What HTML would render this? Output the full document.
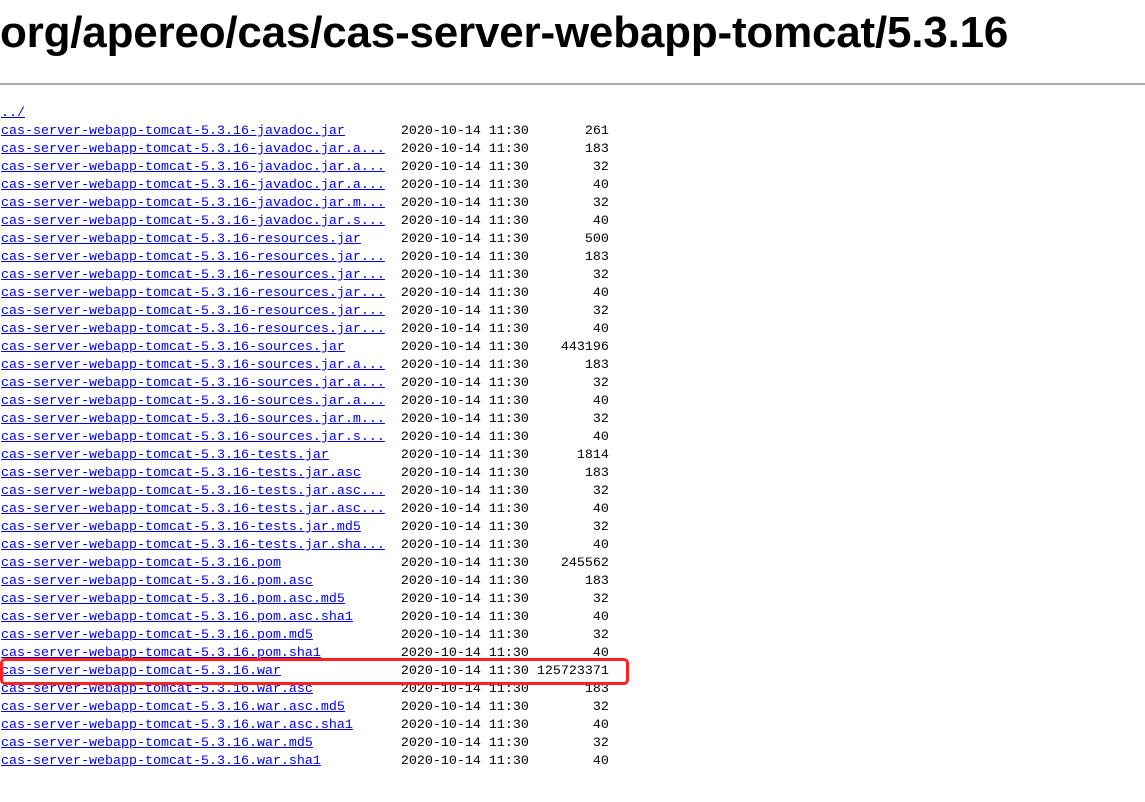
<!DOCTYPE html>
<html><head><meta charset="utf-8"><style>
html,body{margin:0;padding:0;background:#fff;width:1145px;height:802px;overflow:hidden}
h1{position:absolute;left:0;top:8px;margin:0;font:bold 44px "Liberation Sans",sans-serif;color:#000;white-space:nowrap;letter-spacing:-0.2px}
hr{position:absolute;left:0;top:83px;width:1145px;margin:0;border:0;border-top:2px solid #aaa}
pre{position:absolute;left:1px;top:105px;margin:0;font:13.33px/18px "Liberation Mono",monospace;color:#000}
a{color:#00e;text-decoration:underline}
.box{position:absolute;left:0;top:658px;width:623px;height:21px;border:3px solid #f22;border-radius:5px}
</style></head><body>
<h1>org/apereo/cas/cas-server-webapp-tomcat/5.3.16</h1>
<hr>
<pre><a>../</a>
<a>cas-server-webapp-tomcat-5.3.16-javadoc.jar</a>       2020-10-14 11:30       261
<a>cas-server-webapp-tomcat-5.3.16-javadoc.jar.a...</a>  2020-10-14 11:30       183
<a>cas-server-webapp-tomcat-5.3.16-javadoc.jar.a...</a>  2020-10-14 11:30        32
<a>cas-server-webapp-tomcat-5.3.16-javadoc.jar.a...</a>  2020-10-14 11:30        40
<a>cas-server-webapp-tomcat-5.3.16-javadoc.jar.m...</a>  2020-10-14 11:30        32
<a>cas-server-webapp-tomcat-5.3.16-javadoc.jar.s...</a>  2020-10-14 11:30        40
<a>cas-server-webapp-tomcat-5.3.16-resources.jar</a>     2020-10-14 11:30       500
<a>cas-server-webapp-tomcat-5.3.16-resources.jar...</a>  2020-10-14 11:30       183
<a>cas-server-webapp-tomcat-5.3.16-resources.jar...</a>  2020-10-14 11:30        32
<a>cas-server-webapp-tomcat-5.3.16-resources.jar...</a>  2020-10-14 11:30        40
<a>cas-server-webapp-tomcat-5.3.16-resources.jar...</a>  2020-10-14 11:30        32
<a>cas-server-webapp-tomcat-5.3.16-resources.jar...</a>  2020-10-14 11:30        40
<a>cas-server-webapp-tomcat-5.3.16-sources.jar</a>       2020-10-14 11:30    443196
<a>cas-server-webapp-tomcat-5.3.16-sources.jar.a...</a>  2020-10-14 11:30       183
<a>cas-server-webapp-tomcat-5.3.16-sources.jar.a...</a>  2020-10-14 11:30        32
<a>cas-server-webapp-tomcat-5.3.16-sources.jar.a...</a>  2020-10-14 11:30        40
<a>cas-server-webapp-tomcat-5.3.16-sources.jar.m...</a>  2020-10-14 11:30        32
<a>cas-server-webapp-tomcat-5.3.16-sources.jar.s...</a>  2020-10-14 11:30        40
<a>cas-server-webapp-tomcat-5.3.16-tests.jar</a>         2020-10-14 11:30      1814
<a>cas-server-webapp-tomcat-5.3.16-tests.jar.asc</a>     2020-10-14 11:30       183
<a>cas-server-webapp-tomcat-5.3.16-tests.jar.asc...</a>  2020-10-14 11:30        32
<a>cas-server-webapp-tomcat-5.3.16-tests.jar.asc...</a>  2020-10-14 11:30        40
<a>cas-server-webapp-tomcat-5.3.16-tests.jar.md5</a>     2020-10-14 11:30        32
<a>cas-server-webapp-tomcat-5.3.16-tests.jar.sha...</a>  2020-10-14 11:30        40
<a>cas-server-webapp-tomcat-5.3.16.pom</a>               2020-10-14 11:30    245562
<a>cas-server-webapp-tomcat-5.3.16.pom.asc</a>           2020-10-14 11:30       183
<a>cas-server-webapp-tomcat-5.3.16.pom.asc.md5</a>       2020-10-14 11:30        32
<a>cas-server-webapp-tomcat-5.3.16.pom.asc.sha1</a>      2020-10-14 11:30        40
<a>cas-server-webapp-tomcat-5.3.16.pom.md5</a>           2020-10-14 11:30        32
<a>cas-server-webapp-tomcat-5.3.16.pom.sha1</a>          2020-10-14 11:30        40
<a>cas-server-webapp-tomcat-5.3.16.war</a>               2020-10-14 11:30 125723371
<a>cas-server-webapp-tomcat-5.3.16.war.asc</a>           2020-10-14 11:30       183
<a>cas-server-webapp-tomcat-5.3.16.war.asc.md5</a>       2020-10-14 11:30        32
<a>cas-server-webapp-tomcat-5.3.16.war.asc.sha1</a>      2020-10-14 11:30        40
<a>cas-server-webapp-tomcat-5.3.16.war.md5</a>           2020-10-14 11:30        32
<a>cas-server-webapp-tomcat-5.3.16.war.sha1</a>          2020-10-14 11:30        40
</pre>
<div class="box"></div>
</body></html>
